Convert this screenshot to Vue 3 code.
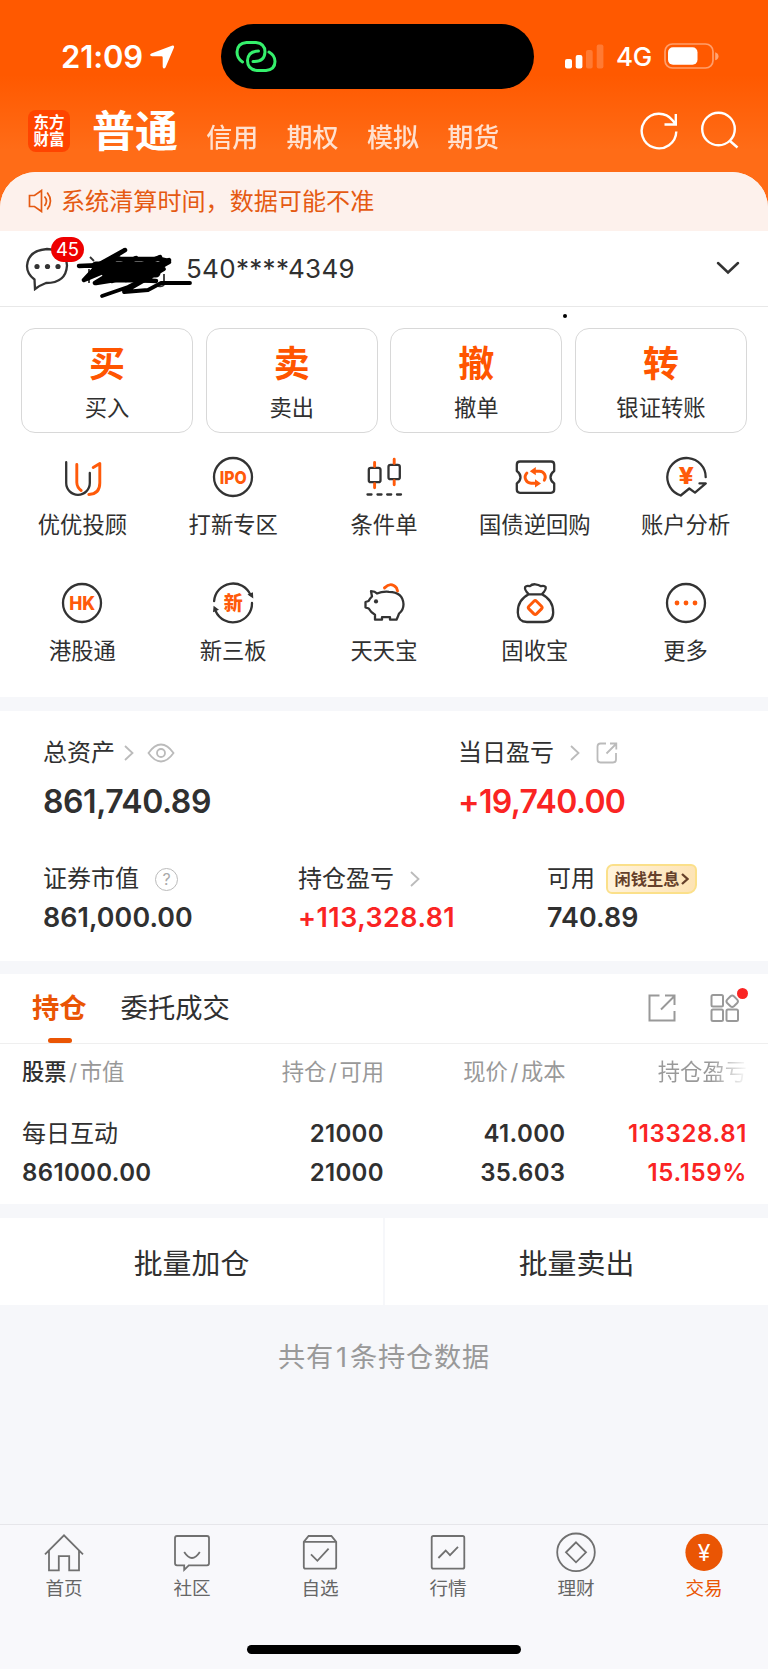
<script setup>
import { ref } from 'vue';

const accountTypes = ['信用', '期权', '模拟', '期货'];

const actions = [
    { icon: '买', label: '买入' },
    { icon: '卖', label: '卖出' },
    { icon: '撤', label: '撤单' },
    { icon: '转', label: '银证转账' }
];

const circle = 'M24 5a19 19 0 1 1 0 38a19 19 0 1 1 0-38z';

// dark = contorno, orange = detalhe, fill = partes preenchidas
const services = [
    {
        label: '优优投顾',
        dark: 'M8.2 9.2V30a11.8 11.8 0 0 0 23.6 0V20',
        orange: 'M18.8 11.5V29.5q.2 5 4.4 8M35.2 14.4l6.6-4V30q0 11-11 11.5'
    },
    { label: '打新专区', dark: circle, text: 'IPO', size: 17.5, width: 27, y: 30.5 },
    {
        label: '条件单',
        dark: 'M10.8 14.8h7.7a2 2 0 0 1 2 2v10.4a2 2 0 0 1-2 2h-7.7a2 2 0 0 1-2-2V16.8a2 2 0 0 1 2-2zM30.5 11.8h7.3a2 2 0 0 1 2 2v10.4a2 2 0 0 1-2 2h-7.3a2 2 0 0 1-2-2V13.8a2 2 0 0 1 2-2zM7.5 41.5h4M17.5 41.5h4M27.2 41.5h4M37 41.5h4',
        orange: 'M14.6 9.4v4.2M14.6 30.6v4.2M34.2 6.2v4.2M34.2 27.6v4.2'
    },
    {
        label: '国债逆回购',
        dark: 'M9 8.5h31q3.2 0 3.2 3.2V18q-3.7 2.5-3.7 6.2t3.7 6.2v6.2q0 3.2-3.2 3.2H9q-3.2 0-3.2-3.2v-6.2q3.7-2.5 3.7-6.2T5.8 18v-6.3q0-3.2 3.2-3.2z',
        orange: 'M24 18.2h4.5a5.8 5.8 0 0 1 4.8 9M15.9 20a6 6 0 0 0 4.6 10.2h4.5',
        fill: 'M18.8 18.2l6-4.2v8.2zM30 30.4l-6-4.2v8.2z'
    },
    {
        label: '账户分析',
        dark: 'M43.7 24.2A19.2 19.2 0 1 0 18.7 42.5L27.3 35.5L33 39.6L43.8 30.4H37.5',
        text: '¥', size: 23, width: 15.5, y: 31
    },
    { label: '港股通', dark: circle, text: 'HK', size: 18.5, width: 26, y: 30.8 },
    {
        label: '新三板',
        dark: 'M5.1 22.2A19 19 0 0 1 41.5 16M43 24A19 19 0 0 1 6.6 32',
        darkFill: 'M38.5 15.6l5.4-2.4.4 6.2zM4 33.2l.6-6.4 5.4 4z',
        text: '新', size: 19, width: 19, y: 30.8
    },
    {
        label: '天天宝',
        dark: 'M17 14.5Q15 12.3 11 12.2l1 5.3Q9.8 19.5 8.6 22L5.5 23v5.3l3.2 1.2q2.200 4 6.300 6.200v5h7v-2.500h8v2.500h6.500q1.500-3 2.500-6q4.500-3.500 4.500-9.400Q43 13 29 12.800q-7-.5-12 1.700z',
        orange: 'M24.5 8.9q6.5-6.5 12 0l1 3',
        darkFill: 'M16 20.3a2.1 2.1 0 1 1 0 4.2a2.1 2.1 0 1 1 0-4.2z'
    },
    {
        label: '固收宝',
        dark: 'M17.8 15.3Q13 10.5 14.2 8q1.3-1.8 4.6-.8Q21 5 24.3 5.3T30 7.2q3.3-1 4.6.8q1 2.5-3.8 7.3zM17.8 15.3Q6.5 21 6.8 33.5Q7 43 16 43h16.500q9.500 0 9.700-9.500Q42.300 21 30.800 15.300',
        orange: 'M22.9 22.3q1.3-1.3 2.6 0l5 5q1.3 1.3 0 2.6l-5 5q-1.3 1.3-2.6 0l-5-5q-1.3-1.3 0-2.6z'
    },
    {
        label: '更多',
        dark: circle,
        fill: 'M15 21.6a2.4 2.4 0 1 1 0 4.8a2.4 2.4 0 1 1 0-4.8zM24 21.6a2.4 2.4 0 1 1 0 4.8a2.4 2.4 0 1 1 0-4.8zM33 21.6a2.4 2.4 0 1 1 0 4.8a2.4 2.4 0 1 1 0-4.8z'
    }
];

const menu = [
    { label: '首页', d: 'M1 22.3L20 3.3L39 22.3M5 18.5V38.3h9.8V24.2h10.4V38.3H35V18.5' },
    { label: '社区', d: 'M5 4h30q2 0 2 2v25.3q0 2-2 2H16.8l-4.6 4.5v-4.5H5q-2 0-2-2V6q0-2 2-2zM12.2 20q7.8 12 15.6 0' },
    { label: '自选', d: 'M3.8 9.9L8.6 4H31.4L36.2 9.9V35q0 1.7-1.7 1.7h-29q-1.7 0-1.7-1.7zM3.8 9.9H36.2M11 22.3l6.4 6.5L28.6 16.7' },
    { label: '行情', d: 'M5.4 4h29.2q1.7 0 1.7 1.7V35q0 1.7-1.7 1.7H5.4q-1.7 0-1.7-1.7V5.7Q3.7 4 5.4 4zM10.4 26l7.3-7.5l4.3 4.6l8-8.3' },
    { label: '理财', d: 'M20 1.5a18.8 18.8 0 1 1 0 37.6a18.8 18.8 0 1 1 0-37.6zM20 10.3l10 10l-10 10l-10-10z' },
    { label: '交易' }
];

const menuAtivo = ref('交易');
const aba = ref('持仓');
</script>

<template>
    <div class="app">
        <header>
            <div class="status">
                <div class="clock">
                    <span>21:09</span>
                    <svg width="26" height="26" viewBox="0 0 26 26"><path d="M23.5 1.500q2-.2 1.500 2L16.500 23.500q-1.800 2.400-2.800-.5V13.500q0-1.200-1.200-1.200H3q-3.400-1-.7-2.700z" fill="#fff" /></svg>
                </div>
                <div class="island">
                    <svg width="42" height="34" viewBox="0 0 42 34" fill="none" stroke="#35f06c" stroke-width="3" stroke-linecap="round">
                        <path d="M7.500 22Q2 18.500 2 12Q2.500 3 11.500 2.500H21Q30 3.500 30 12Q29.500 21.500 19.500 21.500H18" />
                        <path d="M23.500 11Q13 11 12.500 20.500Q12.500 29.500 22 30.500H31Q40 29.500 40 21.500Q40 15.500 34 12" />
                    </svg>
                </div>
                <div class="signal">
                    <svg width="39" height="25" viewBox="0 0 39 25" fill="#fff">
                        <rect x="0" y="15" width="7" height="9.500" rx="2" />
                        <rect x="10.700" y="11" width="6.700" height="13.500" rx="2" />
                        <rect x="21" y="6" width="6.700" height="18.500" rx="2" opacity=".2" />
                        <rect x="31.700" y="0.500" width="6.700" height="24" rx="2" opacity=".2" />
                    </svg>
                    <span>4G</span>
                    <svg width="55" height="26" viewBox="0 0 55 26">
                        <rect x="1" y="1" width="48" height="24" rx="7.500" fill="none" stroke="#fff" stroke-width="1.700" opacity=".42" />
                        <rect x="4" y="4.300" width="29.500" height="17.400" rx="5" fill="#fff" />
                        <path d="M51.200 9.300q3.300 1 3.300 4t-3.300 4z" fill="#fff" opacity=".45" />
                    </svg>
                </div>
            </div>
            <nav>
                <div class="logo"><span>东方</span><span>财富</span></div>
                <h1>普通</h1>
                <a v-for="tipo in accountTypes" :key="tipo">{{ tipo }}</a>
                <div class="tools">
                    <svg width="40" height="40" viewBox="0 0 40 40">
                        <path d="M37.300 20.500A17.300 17.300 0 1 1 33.500 9.200L36.500 13M25.500 13.500H36.800V3" />
                    </svg>
                    <svg width="40" height="40" viewBox="0 0 40 40">
                        <circle cx="18.500" cy="18" r="16.300" />
                        <path d="M30 30l7.500 6.500" />
                    </svg>
                </div>
            </nav>
        </header>

        <main>
            <div class="notice">
                <svg width="24" height="24" viewBox="0 0 24 24" fill="none" stroke="#e55a12" stroke-width="1.700">
                    <path d="M1.500 6.500h5L13.500 1.500v21L6.500 17.500h-5zM16.500 7.500q4 4.500 0 9.500M19.200 3.500q6.500 8.500 0 17" />
                </svg>
                <span>系统清算时间，数据可能不准</span>
            </div>

            <div class="account">
                <svg class="chat" width="44" height="44" viewBox="0 0 44 44">
                    <path d="M9.500 32.500Q2 27 2 19Q3 3.500 22 2Q41 3 42 18.500Q41 36 21 36Q14.500 38.500 10 42z" fill="none" stroke="#333" stroke-width="2.300" />
                    <circle cx="12" cy="19.500" r="2.600" /><circle cx="22.500" cy="19.500" r="2.600" /><circle cx="33" cy="19.500" r="2.600" />
                </svg>
                <span class="badge">45</span>
                <span class="number">540****4349</span>
                <svg class="scribble" width="118" height="54" viewBox="0 0 118 54">
                    <g fill="none" stroke="#333" stroke-width="1.800">
                        <path d="M14 10l4 4M13 22v14M15 23h8M42 9l4 3M88 27v10q0 3-6 2" />
                    </g>
                    <g fill="none" stroke="#000" stroke-width="4.500" stroke-linecap="round" stroke-linejoin="round">
                        <path d="M3 19L25 18L49 3L22 18L8 33L60 11L19 36L84 10L36 34L93 13L50 33L93 15L60 33L80 34" />
                        <path d="M12 31L40 12H84L92 14L80 24L60 33L45 32L20 36" />
                        <path d="M26 49L52 40L88 22L48 45L72 43L85 36H114" stroke-width="3.800" />
                        <path d="M20 19H80M30 26H80M40 31H72" stroke-width="9" />
                    </g>
                </svg>
                <svg class="down" width="24" height="14" viewBox="0 0 24 14"><path d="M2 2l10 9.500L22 2" fill="none" stroke="#333" stroke-width="2.500" stroke-linecap="round" /></svg>
                <i class="dot"></i>
            </div>

            <div class="actions">
                <button v-for="acao in actions" :key="acao.label">
                    <b>{{ acao.icon }}</b>
                    <span>{{ acao.label }}</span>
                </button>
            </div>

            <div class="services">
                <div v-for="item in services" :key="item.label" class="service">
                    <svg width="48" height="48" viewBox="0 0 48 48">
                        <path :d="item.dark" class="dark" />
                        <path v-if="item.darkFill" :d="item.darkFill" fill="#333" />
                        <path v-if="item.orange" :d="item.orange" class="orange" />
                        <path v-if="item.fill" :d="item.fill" fill="#ff5a0a" />
                        <text v-if="item.text" x="24.200" :y="item.y" :font-size="item.size" :textLength="item.width" lengthAdjust="spacingAndGlyphs">{{ item.text }}</text>
                    </svg>
                    <span>{{ item.label }}</span>
                </div>
            </div>

            <section class="assets">
                <div class="total">
                    <div>
                        <p>总资产
                            <svg class="arrow" width="10" height="16" viewBox="0 0 10 16"><path d="M1 1l7.500 7L1 15" /></svg>
                            <svg class="eye" width="28" height="20" viewBox="0 0 28 20"><path d="M1.500 10Q7.500 1.500 14 1.500T26.500 10Q20.500 18.500 14 18.500T1.500 10z" /><circle cx="14" cy="10" r="4" /></svg>
                        </p>
                        <strong>861,740.89</strong>
                    </div>
                    <div>
                        <p>当日盈亏
                            <svg class="arrow wide" width="10" height="16" viewBox="0 0 10 16"><path d="M1 1l7.500 7L1 15" /></svg>
                            <svg class="share" width="22" height="22" viewBox="0 0 22 22"><path d="M10 1.500H4.500q-3 0-3 3v13q0 3 3 3h12.500q3 0 3-3V11M10.500 11.500L20 2M14 1.500h6.300V7.500" /></svg>
                        </p>
                        <strong class="red today">+19,740.00</strong>
                    </div>
                </div>
                <div class="detail">
                    <div>
                        <p>证券市值 <span class="help">?</span></p>
                        <strong>861,000.00</strong>
                    </div>
                    <div>
                        <p>持仓盈亏
                            <svg class="arrow wide" width="10" height="16" viewBox="0 0 10 16"><path d="M1 1l7.500 7L1 15" /></svg>
                        </p>
                        <strong class="red">+113,328.81</strong>
                    </div>
                    <div>
                        <p>可用
                            <span class="tag">闲钱生息<svg width="8" height="12" viewBox="0 0 8 12"><path d="M1 1l5.500 5L1 11" /></svg></span>
                        </p>
                        <strong>740.89</strong>
                    </div>
                </div>
            </section>

            <section class="positions">
                <div class="tabs">
                    <a :class="{ ativo: aba === '持仓' }" @click="aba = '持仓'">持仓</a>
                    <a :class="{ ativo: aba === '委托成交' }" @click="aba = '委托成交'">委托成交</a>
                    <div class="tab-icons">
                        <svg width="28" height="28" viewBox="0 0 28 28"><path d="M11.500 1.500h-10v25h25V17M13 15.500L26.500 2M17 1.500h9.500V11" /></svg>
                        <svg width="30" height="30" viewBox="0 0 30 30">
                            <rect x="1.500" y="2" width="11.500" height="11.500" rx="1.500" />
                            <rect x="1.500" y="16.500" width="11.500" height="11.500" rx="1.500" />
                            <rect x="16.500" y="16.500" width="11.500" height="11.500" rx="1.500" />
                            <path d="M20.500 3.300q1.700-1.500 3.400 0l3.300 3.300q1.500 1.700 0 3.400l-3.300 3.300q-1.700 1.500-3.400 0L17.200 10q-1.500-1.700 0-3.400z" />
                        </svg>
                        <i></i>
                    </div>
                </div>
                <div class="row head">
                    <span><em>股票</em><u>/</u>市值</span>
                    <span>持仓<u>/</u>可用</span>
                    <span>现价<u>/</u>成本</span>
                    <span class="fade">持仓盈亏</span>
                </div>
                <div class="row">
                    <span class="name">每日互动</span>
                    <span>21000</span>
                    <span>41.000</span>
                    <span class="red profit">113328.81</span>
                </div>
                <div class="row">
                    <span>861000.00</span>
                    <span>21000</span>
                    <span>35.603</span>
                    <span class="red profit">15.159%</span>
                </div>
            </section>

            <div class="batch">
                <button>批量加仓</button>
                <button>批量卖出</button>
            </div>

            <p class="count">共有<span>1</span>条持仓数据</p>
        </main>

        <footer>
            <div class="menu">
                <a v-for="item in menu" :key="item.label" :class="{ ativo: menuAtivo === item.label }" @click="menuAtivo = item.label">
                    <svg width="40" height="40" viewBox="0 0 40 40">
                        <path v-if="item.d" :d="item.d" />
                        <template v-else>
                            <circle cx="20" cy="20.300" r="18.600" />
                            <text x="20" y="28.500">¥</text>
                        </template>
                    </svg>
                    <span>{{ item.label }}</span>
                </a>
            </div>
            <div class="home-bar"></div>
        </footer>
    </div>
</template>

<style>
body {
    margin: 0;
}
</style>

<style scoped>
.app {
    display: flex;
    flex-direction: column;
    width: 768px;
    height: 1669px;
    overflow: hidden;
    color: #303030;
    font-family: Inter, "Noto Sans CJK SC", sans-serif;
    background: linear-gradient(#ff5900 0, #ff5900 75px, #ff6c17 150px, #ff6c17 230px, #f7f8fa 230px);
}

p, h1 {
    margin: 0;
}

button {
    padding: 0;
    color: inherit;
    font-family: inherit;
    background: #fff;
    border: none;
}

.red {
    color: #fa2423;
}

/* topo */
header {
    height: 171.5px;
    flex: none;
    color: #fff;
}

.status {
    display: grid;
    grid-template-columns: 220.5px 313.5px 1fr;
    grid-template-rows: 64.5px;
    height: 64.5px;
    padding-top: 24px;
}

.clock {
    display: flex;
    align-items: center;
    gap: 6px;
    padding-left: 61px;
    font-size: 31px;
    font-weight: 600;
    letter-spacing: -0.1px;
}

.clock svg {
    margin-top: 1px;
}

.island {
    box-sizing: border-box;
    padding: 16px 14px;
    background: #000;
    border-radius: 33px;
}

.island svg {
    display: block;
}

.signal {
    display: flex;
    align-items: center;
    padding-left: 31px;
    font-size: 26px;
    font-weight: 500;
}

.signal span {
    margin: 1px 12px 0;
    letter-spacing: -0.4px;
}

nav {
    display: flex;
    height: 83px;
    padding: 0 28px 0 28px;
}

nav a {
    margin: 31px 0 0 28.3px;
    font-size: 26px;
    font-weight: 500;
    line-height: 36px;
    opacity: .8;
}

.logo {
    display: flex;
    flex-direction: column;
    align-items: center;
    justify-content: center;
    width: 42px;
    height: 42px;
    margin-top: 21.5px;
    font-size: 15.5px;
    font-weight: 700;
    line-height: 17px;
    background: #ff4400;
    border-radius: 8px;
}

h1 {
    margin: 12px 0 0 22px;
    font-size: 43px;
    font-weight: 700;
    line-height: 60px;
}

.tools {
    display: flex;
    gap: 21px;
    margin: 22.5px 0 0 auto;
}

.tools svg {
    fill: none;
    stroke: #fff;
    stroke-width: 2.4;
}

main {
    flex: 1;
    overflow: hidden;
    background: #f6f7fa;
    border-radius: 36px 36px 0 0;
}

.notice {
    display: flex;
    align-items: center;
    gap: 9px;
    height: 59px;
    padding-left: 28px;
    color: #e55a12;
    font-size: 24.1px;
    background: #fdf1ec;
}

.notice span {
    margin-top: -3px;
}

.account {
    position: relative;
    display: flex;
    align-items: center;
    height: 75.5px;
    padding: 0 28px 0 25px;
    background: #fff;
    border-bottom: 1px solid #e8e8e8;
}

.chat {
    margin-top: 1px;
    fill: #333;
}

.badge {
    position: absolute;
    left: 51px;
    top: 6.5px;
    width: 33px;
    height: 25px;
    color: #fff;
    font-size: 18.5px;
    line-height: 25px;
    text-align: center;
    background: #ee0000;
    border-radius: 13px;
}

.number {
    margin: 1px 0 0 117px;
    font-size: 26px;
    letter-spacing: 0.3px;
}

.scribble {
    position: absolute;
    left: 76px;
    top: 16px;
}

.down {
    margin-left: auto;
}

.dot {
    position: absolute;
    left: 563px;
    top: 83px;
    width: 4px;
    height: 4px;
    background: #000;
    border-radius: 50%;
}

/* botões principais */
.actions {
    display: grid;
    grid-template-columns: repeat(4, 1fr);
    gap: 12.5px;
    padding: 21px 21px 0;
    background: #fff;
}

.actions button {
    display: flex;
    flex-direction: column;
    align-items: center;
    box-sizing: border-box;
    height: 105px;
    padding-top: 9px;
    border: 1.2px solid #d8d8d8;
    border-radius: 14px;
}

.actions b {
    color: #ff5500;
    font-size: 36px;
    line-height: 52px;
}

.actions span {
    font-size: 22.3px;
    line-height: 35px;
}

.services {
    display: grid;
    grid-template-columns: repeat(5, 1fr);
    row-gap: 41.5px;
    height: 244px;
    padding: 20px 7px 0;
    align-content: start;
    background: #fff;
}

.service {
    display: flex;
    flex-direction: column;
    align-items: center;
    height: 84px;
    font-size: 22.3px;
    line-height: 32px;
    white-space: nowrap;
}

.service span {
    margin-top: 8px;
}

.service svg {
    flex: none;
}

.dark, .orange {
    fill: none;
    stroke: #333;
    stroke-width: 2.3;
    stroke-linejoin: round;
    stroke-linecap: round;
}

.orange {
    stroke: #ff5a0a;
    stroke-width: 2.9;
}

.service text {
    fill: #ff5a0a;
    font-weight: 800;
    text-anchor: middle;
}

/* patrimônio */
.assets {
    height: 250px;
    margin-top: 13.5px;
    background: #fff;
}

.assets p {
    display: flex;
    align-items: center;
    font-size: 24px;
    line-height: 36px;
    white-space: nowrap;
}

.assets svg {
    fill: none;
    stroke: #bbb;
    stroke-width: 1.8;
}

.assets strong {
    display: block;
    font-weight: 600;
}

.total {
    display: grid;
    grid-template-columns: 415px 1fr;
    padding: 24.5px 0 0 43px;
}

.total strong {
    margin-top: 11px;
    font-size: 32px;
    line-height: 40px;
    letter-spacing: -0.45px;
}

.total .today {
    letter-spacing: -0.65px;
}

.arrow {
    margin-left: 9px;
}

.arrow.wide {
    margin-left: 16px;
}

.eye {
    margin-left: 13px;
}

.share {
    margin-left: 16px;
}

.detail {
    display: grid;
    grid-template-columns: 255px 249px 1fr;
    padding: 39px 0 0 43px;
}

.detail strong {
    margin-top: 3px;
    font-size: 26.8px;
    line-height: 34px;
    letter-spacing: 0.1px;
}

.detail .red {
    letter-spacing: 0.5px;
}

.help {
    box-sizing: border-box;
    width: 23px;
    height: 23px;
    margin-left: 16px;
    color: #aaa;
    font-size: 16px;
    line-height: 20px;
    text-align: center;
    border: 1.5px solid #bbb;
    border-radius: 50%;
}

.tag {
    display: flex;
    align-items: center;
    box-sizing: border-box;
    height: 30px;
    margin-left: 10.5px;
    padding: 0 6px 0 7px;
    color: #65402a;
    font-size: 16.3px;
    font-weight: 700;
    background: linear-gradient(100deg, #fff3dc, #fde3b4);
    border: 2px solid #fbe08a;
    border-radius: 7px 6px 9px 6px;
}

.tag svg {
    margin-left: 1px;
    stroke: #65402a;
    stroke-width: 2.3;
}

/* posições */
.positions {
    height: 229.5px;
    margin-top: 13.5px;
    background: #fff;
}

.tabs {
    display: flex;
    height: 68.5px;
    padding: 0 28px 0 32px;
    font-size: 27.3px;
    line-height: 70px;
    border-bottom: 1px solid #efefef;
}

.tabs a {
    position: relative;
    margin-right: 34px;
}

.tabs .ativo {
    color: #ea5504;
    font-weight: 700;
}

.tabs .ativo::after {
    content: "";
    position: absolute;
    left: 15.5px;
    bottom: 0;
    width: 24.5px;
    height: 5px;
    background: #ea5504;
    border-radius: 3px;
}

.tab-icons {
    position: relative;
    display: flex;
    align-items: center;
    gap: 34px;
    margin-left: auto;
}

.tab-icons svg {
    fill: none;
    stroke: #999;
    stroke-width: 2;
}

.tab-icons i {
    position: absolute;
    right: -7.5px;
    top: 13.5px;
    width: 11px;
    height: 11px;
    background: #fa2423;
    border-radius: 50%;
}

.row {
    display: grid;
    grid-template-columns: 180px 182px 181.5px 181.5px;
    height: 39px;
    padding: 0 22px;
    font-size: 24px;
    font-weight: 600;
    line-height: 39px;
    letter-spacing: 0.35px;
}

.row span {
    text-align: right;
}

.row span:first-child {
    text-align: left;
}

.row .name {
    font-weight: 400;
    letter-spacing: 0;
}

.row .profit {
    letter-spacing: 0.65px;
}

.head {
    height: 70.5px;
    color: #999;
    font-size: 22.3px;
    font-weight: 400;
    line-height: 56px;
    letter-spacing: 0;
}

.head em {
    color: #303030;
    font-style: normal;
    font-weight: 500;
}

.head u {
    padding: 0 2.5px;
    text-decoration: none;
}

.head .fade {
    color: transparent;
    background: linear-gradient(90deg, #999 80%, #fff 101%);
    background-clip: text;
}

.batch {
    display: grid;
    grid-template-columns: 1fr 1fr;
    gap: 2px;
    height: 87.5px;
    margin-top: 14px;
}

.batch button {
    font-size: 28.9px;
}

.count {
    margin-top: 32px;
    color: #999;
    font-size: 27.2px;
    line-height: 42px;
    letter-spacing: 0.8px;
    text-align: center;
}

.count span {
    padding: 0 2px;
}

/* menu inferior */
footer {
    flex: none;
    box-sizing: border-box;
    height: 145.5px;
    background: #f8f8fb;
    border-top: 1.5px solid #e6e6ea;
}

.menu {
    display: grid;
    grid-template-columns: repeat(6, 1fr);
    height: 120.5px;
}

.menu a {
    display: flex;
    flex-direction: column;
    align-items: center;
    padding-top: 7px;
    color: #666;
    font-size: 18.6px;
    line-height: 28px;
}

.menu span {
    margin-top: 2px;
}

.menu svg {
    fill: none;
    stroke: #707070;
    stroke-width: 1.8;
}

.menu .ativo {
    color: #ea5504;
}

.menu circle {
    fill: #ea5504;
    stroke: none;
}

.menu text {
    fill: #fff;
    stroke: none;
    font-size: 23px;
    text-anchor: middle;
}

.home-bar {
    width: 274px;
    height: 9px;
    margin: 0 auto;
    background: #000;
    border-radius: 5px;
}
</style>
